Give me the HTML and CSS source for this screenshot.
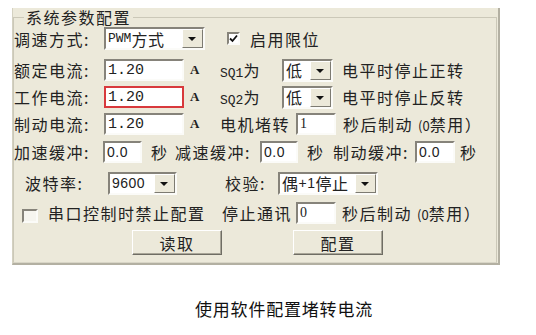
FILE: index.html
```html
<!DOCTYPE html>
<html lang="zh-CN">
<head>
    <meta charset="UTF-8">
    <title>系统参数配置</title>
    <link rel="stylesheet" href="styles.css">
</head>
<body>
    <!-- Dialog panel -->
    <div class="panel">
        <fieldset class="group">
            <legend>系统参数配置</legend>

            <!-- speed mode + limit -->
            <div class="row r1">
                <span class="cell w90">调速方式:</span>
                <span class="select w101"><span class="val"><span class="mono">PWM</span>方式</span><span class="drop"></span></span>
                <span class="check checked ml22"><svg viewBox="0 0 9 9" width="9" height="9"><path d="M1 4.5 L3.5 7 L8 1.5" fill="none" stroke="#111" stroke-width="1.8"/></svg></span>
                <span class="ml10">启用限位</span>
            </div>

            <div class="row r2">
                <span class="cell w90">额定电流:</span>
                <span class="field w80 mono-val">1.20</span>
                <span class="cell w36 unit">A</span>
                <span class="cell w62"><span class="mono sq">SQ1</span>为</span>
                <span class="select w51"><span class="val">低</span><span class="drop"></span></span>
                <span class="ml9">电平时停止正转</span>
            </div>

            <div class="row r3">
                <span class="cell w90">工作电流:</span>
                <span class="field w80 mono-val hl">1.20</span>
                <span class="cell w36 unit">A</span>
                <span class="cell w62"><span class="mono sq">SQ2</span>为</span>
                <span class="select w51"><span class="val">低</span><span class="drop"></span></span>
                <span class="ml9">电平时停止反转</span>
            </div>

            <div class="row r4">
                <span class="cell w90">制动电流:</span>
                <span class="field w80 mono-val">1.20</span>
                <span class="cell w36 unit">A</span>
                <span class="cell w76">电机堵转</span>
                <span class="field w40 serif-val">1</span>
                <span class="ml7">秒后制动 <span class="small">(0</span>禁用）</span>
            </div>

            <!-- ramp buffers -->
            <div class="row r5">
                <span class="cell w89">加速缓冲:</span>
                <span class="field w39 sans-val">0.0</span>
                <span class="cell w33 pl9">秒</span>
                <span class="cell w85">减速缓冲:</span>
                <span class="field w38 sans-val">0.0</span>
                <span class="cell w35 pl9">秒</span>
                <span class="cell w82">制动缓冲:</span>
                <span class="field w40 sans-val">0.0</span>
                <span class="pl5">秒</span>
            </div>

            <!-- serial port -->
            <div class="row r6">
                <span class="cell w94 pl11">波特率:</span>
                <span class="select w69"><span class="val sans-val">9600</span><span class="drop"></span></span>
                <span class="cell w101 pl48">校验:</span>
                <span class="select w100"><span class="val">偶<span class="sans-val">+1</span>停止</span><span class="drop"></span></span>
            </div>

            <div class="row r7">
                <span class="cell w34 pl8"><span class="check flat"></span></span>
                <span class="cell w174">串口控制时禁止配置</span>
                <span class="cell w74">停止通讯</span>
                <span class="field w40 serif-val">0</span>
                <span class="ml6">秒后制动 <span class="small">(0</span>禁用）</span>
            </div>

            <div class="row r8">
                <button class="btn ml118">读取</button>
                <button class="btn ml71">配置</button>
            </div>
        </fieldset>
    </div>

    <p class="caption">使用软件配置堵转电流</p>
</body>
</html>
```

FILE: styles.css
```css
/* page */
body {
    margin: 0;
    background: #fff;
    font-family: "Noto Sans CJK SC", "Liberation Sans", sans-serif;
    color: #222;
}

/* dialog panel */
.panel {
    margin: 8px 0 0 12px;
    width: 488px;
    height: 257px;
    box-sizing: border-box;
    background: #ece9da;
    border-left: 1px solid #d4d1c1;
    border-right: 2px solid #b3b0a2;
    border-bottom: 2px solid #b3b0a2;
}
.group {
    margin: 0 1px 0 0;
    padding: 0;
    height: 255px;
    box-sizing: border-box;
    border: 1px solid #cbc8b8;
    border-bottom-color: #d9d6c7;
}
.group legend {
    margin-left: 10px;
    padding: 0 2px;
    font-size: 16px;
    line-height: 18px;
    letter-spacing: 1.5px;
}

/* rows */
.row {
    display: flex;
    align-items: center;
    height: 22px;
    font-size: 16px;
    letter-spacing: 1.5px;
    white-space: nowrap;
}
.r1 { margin-top: 1px; height: 23px; }
.r2 { margin-top: 9px; }
.r3 { margin-top: 5px; }
.r4 { margin-top: 5px; }
.r5 { margin-top: 6px; }
.r6 { margin-top: 9px; }
.r7 { margin-top: 8px; }
.r8 { margin-top: 6px; height: 25px; }

.cell { flex: none; display: inline-block; }
.w33 { width: 33px; } .w34 { width: 34px; } .w35 { width: 35px; } .w36 { width: 36px; }
.w38 { width: 38px; } .w39 { width: 39px; } .w40 { width: 40px; } .w51 { width: 51px; }
.w62 { width: 62px; } .w69 { width: 69px; } .w74 { width: 74px; } .w76 { width: 76px; }
.w80 { width: 80px; } .w82 { width: 82px; } .w85 { width: 85px; } .w89 { width: 89px; }
.w90 { width: 90px; } .w94 { width: 94px; } .w100 { width: 100px; } .w101 { width: 101px; }
.w174 { width: 174px; }
.cell.pl5, .pl5 { padding-left: 5px; }
.pl8 { padding-left: 8px; } .pl9 { padding-left: 9px; } .pl11 { padding-left: 11px; } .pl48 { padding-left: 48px; }
.cell[class*="pl"] { box-sizing: border-box; }
.ml6 { margin-left: 6px; } .ml7 { margin-left: 7px; } .ml9 { margin-left: 9px; } .ml10 { margin-left: 10px; }
.ml22 { margin-left: 22px; } .ml71 { margin-left: 71px; } .ml118 { margin-left: 118px; }

.unit {
    padding-left: 6px;
    box-sizing: border-box;
    font-family: "Liberation Serif", serif;
    font-size: 13px;
    font-weight: bold;
}
.mono { font-family: "Liberation Mono", monospace; letter-spacing: 0; }
.sq { font-size: 13px; }
.small { font-size: 13px; letter-spacing: 0; }

/* sunken edit box */
.field {
    flex: none;
    display: flex;
    align-items: center;
    height: 22px;
    box-sizing: border-box;
    padding-left: 2px;
    background: #fff;
    border: 2px solid;
    border-color: #86837a #fbfbf8 #fbfbf8 #86837a;
    letter-spacing: 0;
}
.field.hl {
    border: 2px solid #d8393c;
}
.mono-val { font-family: "Liberation Mono", monospace; font-size: 15px; }
.sans-val { font-family: "Liberation Sans", sans-serif; font-size: 14px; letter-spacing: 0.5px; }
.serif-val { font-family: "Liberation Serif", serif; font-size: 14px; }

/* combo box */
.select {
    flex: none;
    display: flex;
    height: 23px;
    box-sizing: border-box;
    background: #fff;
    border: 2px solid;
    border-color: #86837a #fbfbf8 #fbfbf8 #86837a;
}
.select .val {
    flex: 1;
    display: flex;
    align-items: center;
    padding-left: 2px;
    letter-spacing: 0.5px;
}
.select .mono { font-size: 13px; }
.drop {
    flex: none;
    width: 19px;
    position: relative;
    background: #ece9da;
    border: 1px solid;
    border-color: #fff #7d7b72 #7d7b72 #fff;
}
.drop::after {
    content: "";
    position: absolute;
    left: 5px;
    top: 7px;
    border-left: 4px solid transparent;
    border-right: 4px solid transparent;
    border-top: 4px solid #111;
}

/* check boxes */
.check {
    flex: none;
    display: inline-flex;
    align-items: center;
    justify-content: center;
    width: 13px;
    height: 13px;
    box-sizing: border-box;
    background: #fff;
    border: 2px solid;
    border-color: #86837a #fbfbf8 #fbfbf8 #86837a;
}
.check.flat {
    width: 16px;
    height: 14px;
    vertical-align: middle;
    background: #f6f5ef;
}

/* push buttons */
.btn {
    flex: none;
    width: 90px;
    height: 25px;
    padding: 0;
    background: #ece9da;
    border: 1px solid;
    border-color: #fff #6f6d64 #6f6d64 #fff;
    box-shadow: inset -1px -1px #a9a698;
    font-family: "Noto Sans CJK SC", sans-serif;
    font-size: 16px;
    letter-spacing: 1.5px;
    color: #222;
}

/* caption under the picture */
.caption {
    margin: 31px 0 0 195px;
    font-size: 17px;
    letter-spacing: 0.8px;
    color: #111;
}
```
